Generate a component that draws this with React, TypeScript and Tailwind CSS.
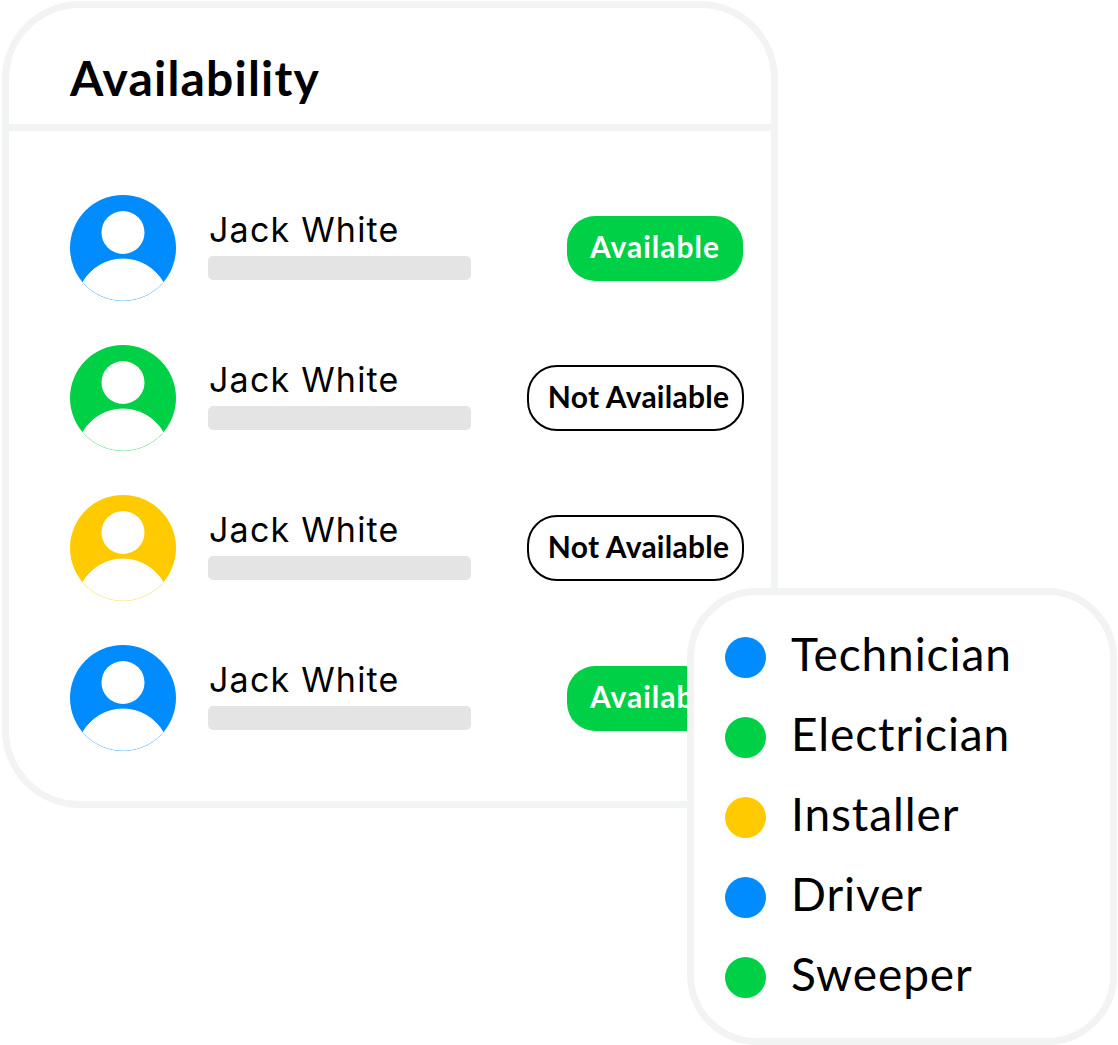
const ROWS = [
  { color: "#008cff", available: true },
  { color: "#00d046", available: false },
  { color: "#ffcb00", available: false },
  { color: "#008cff", available: true },
];

const LEGEND = [
  { label: "Technician", dot: "bg-[#008cff]" },
  { label: "Electrician", dot: "bg-[#00d046]" },
  { label: "Installer", dot: "bg-[#ffcb00]" },
  { label: "Driver", dot: "bg-[#008cff]" },
  { label: "Sweeper", dot: "bg-[#00d046]" },
];

function Avatar({ color }: { color: string }) {
  return (
    <svg width="106" height="106" viewBox="0 0 106 106" className="shrink-0">
      <circle cx="53" cy="53" r="53" fill={color} />
      <circle cx="53" cy="37.5" r="21.5" fill="#fff" />
      <path d="M13 87 A46.3 46.3 0 0 1 93 87 A53 53 0 0 1 13 87 Z" fill="#fff" stroke="#fff" strokeWidth="1" />
    </svg>
  );
}

function Badge({ available }: { available: boolean }) {
  if (available) {
    return (
      <span className="flex h-[65px] w-[176px] items-center justify-center rounded-[28px] bg-[#00d046] pb-[4px] text-[30px] font-bold tracking-[1px] text-white">
        Available
      </span>
    );
  }
  return (
    <span className="-mr-px flex h-[66px] w-[217px] items-center justify-center rounded-[30px] border-2 border-black bg-white pb-[4px] pl-[6px] text-[30px] font-bold tracking-[0.25px] text-black">
      Not Available
    </span>
  );
}

export default function App() {
  return (
    <div className="relative h-[1045px] w-[1118px] overflow-hidden bg-white font-['Lato',sans-serif] text-black">
      <div className="ml-[2px] mt-[1px] h-[807px] w-[776px] rounded-[78px] border-[7px] border-[#f2f3f3]">
        <div className="flex h-[123px] items-center border-b-[7px] border-[#f2f3f3] pl-[61px] pt-[24px]">
          <h1 className="text-[48px] font-bold leading-none tracking-[1.2px]">Availability</h1>
        </div>
        <div className="flex flex-col gap-[44px] pl-[61px] pr-[28px] pt-[64px]">
          {ROWS.map((row, i) => (
            <div key={i} className="flex h-[106px] items-center">
              <Avatar color={row.color} />
              <div className="ml-[32px] flex w-[263px] flex-col">
                <span className="mb-[12px] pl-px font-['Inter',sans-serif] text-[34px] leading-[28px] tracking-[1.2px]">Jack White</span>
                <span className="h-[24px] rounded-[5px] bg-[#e4e4e4]" />
              </div>
              <div className="ml-auto">
                <Badge available={row.available} />
              </div>
            </div>
          ))}
        </div>
      </div>
      <div className="absolute left-[687px] top-[588px] flex h-[457px] w-[430px] flex-col rounded-[70px] border-[7px] border-[#f2f3f3] bg-white pl-[31px] pt-[22px]">
        {LEGEND.map((item) => (
          <div key={item.label} className="flex h-[80px] items-center">
            <span className={`h-[41px] w-[41px] rounded-full ${item.dot}`} />
            <span className="ml-[25px] pb-[6px] text-[46px] leading-none tracking-[0.9px]">{item.label}</span>
          </div>
        ))}
      </div>
    </div>
  );
}
